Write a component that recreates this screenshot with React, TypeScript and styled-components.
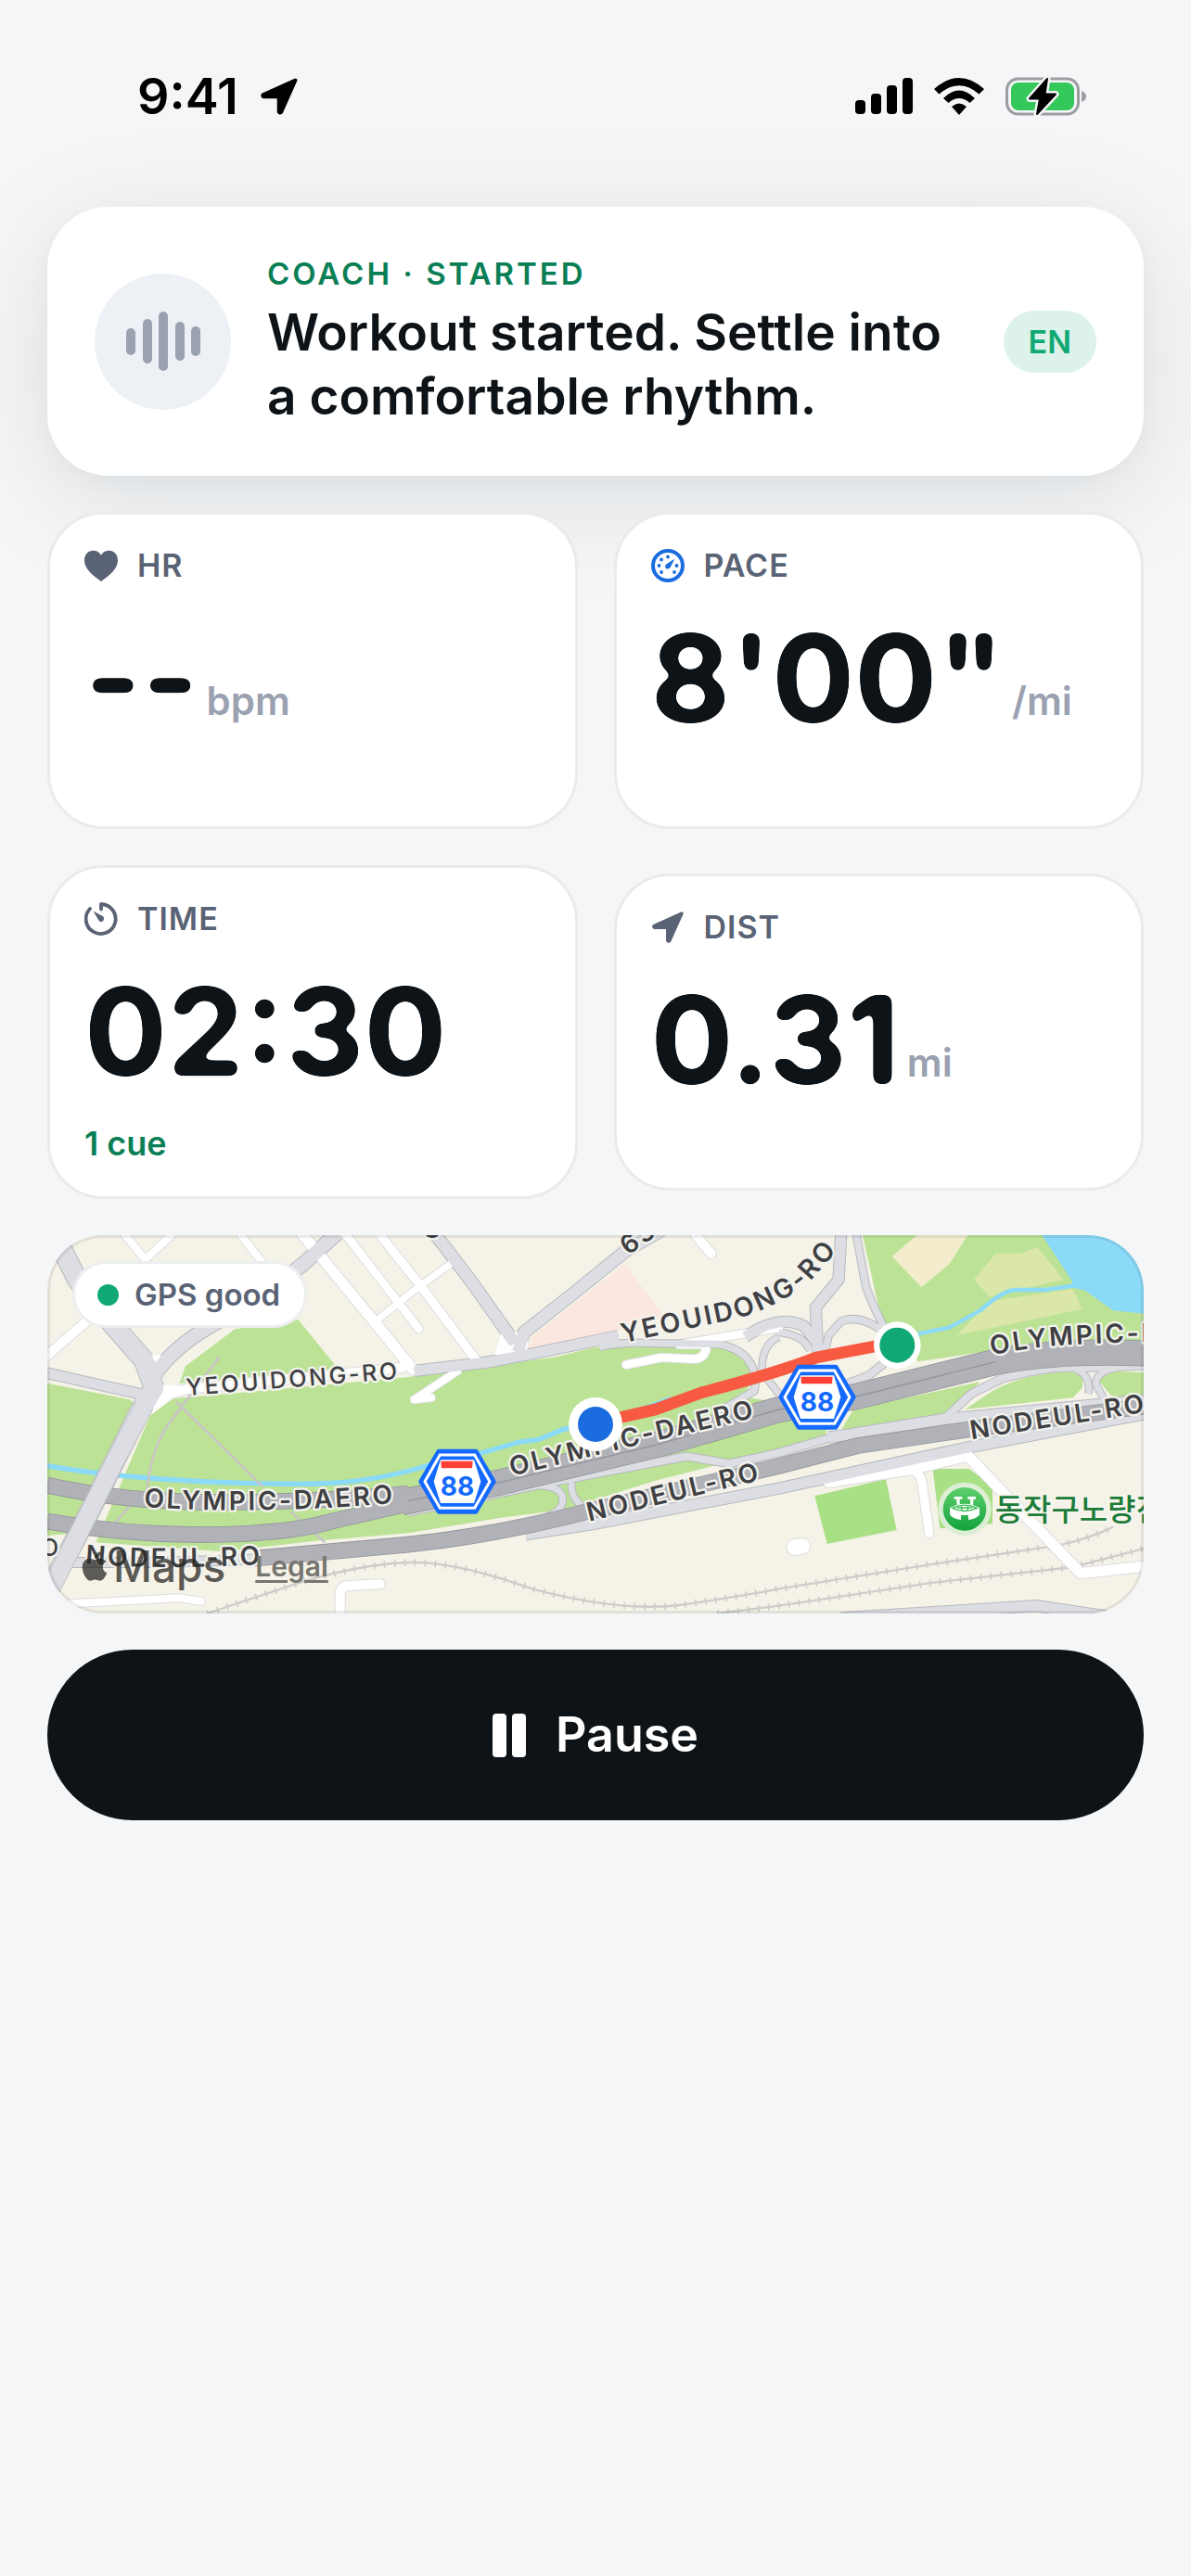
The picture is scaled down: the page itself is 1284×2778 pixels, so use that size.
import { ReactNode, useState } from 'react';
import styled, { createGlobalStyle, ThemeProvider } from 'styled-components';
import { FaApple } from 'react-icons/fa';

const theme = {
  background: '#f4f6f8',
  surface: '#ffffff',
  border: '#e9ebec',
  text: '#0e1318',
  label: '#5a6375',
  muted: '#9aa1b0',
  green: '#11a973',
  greenDark: '#0a7f56',
  greenLight: '#dcf2ea',
  blue: '#1b6ddf',
  font: `Inter, 'Liberation Sans', 'Noto Sans CJK KR', sans-serif`,
};

interface IStat {
  label: string;
  icon: ReactNode;
  value: string;
  unit?: string;
  note?: string;
}

const ArrowIcon = ({ size }: { size: number }) => (
  <svg width={size} height={size} viewBox="0 0 42 42" aria-hidden="true">
    <path
      d="M38.500 3.500L3.500 19.200Q3 20.800 4.500 21.300H20.700V37.500Q21.600 39.200 23.100 38Z"
      fill="currentColor"
      stroke="currentColor"
      strokeWidth="4"
      strokeLinejoin="round"
    />
  </svg>
);

const HeartIcon = () => (
  <svg width="36" height="36" viewBox="0 0 36 36" aria-hidden="true">
    <path
      d="M18 35C8 28 0 21 0 12.500 0 6 4 1.800 9.500 1.800c3.700 0 6.700 1.900 8.500 4.900 1.800-3 4.800-4.900 8.500-4.900C32 1.800 36 6 36 12.500 36 21 28 28 18 35Z"
      fill="currentColor"
    />
  </svg>
);

const GaugeIcon = () => (
  <svg width="36" height="36" viewBox="0 0 36 36" aria-hidden="true">
    <g fill={theme.blue}>
      <circle cx="18" cy="18" r="16" fill="none" stroke={theme.blue} strokeWidth="4" />
      <circle cx="18" cy="8.500" r="1.900" />
      <circle cx="11" cy="11.500" r="1.900" />
      <circle cx="8.500" cy="18" r="1.900" />
      <circle cx="27.500" cy="18" r="1.900" />
      <circle cx="11" cy="25" r="1.900" />
      <circle cx="25" cy="25" r="1.900" />
      <path d="M25.500 10.500L15.500 17Q14.500 20 16.500 21.300 19.500 22.300 20.800 19.500Z" />
    </g>
  </svg>
);

const TimerIcon = () => (
  <svg width="36" height="36" viewBox="0 0 36 36" aria-hidden="true">
    <path
      d="M18 7.500V2a16 16 0 1 1-12 5"
      fill="none"
      stroke="currentColor"
      strokeWidth="3.800"
      strokeLinecap="round"
      strokeLinejoin="round"
    />
    <path
      d="M9.500 9.500L20.500 15.500Q22 19.200 19 20.900 17 21.500 15.500 19.800Z"
      fill="currentColor"
    />
  </svg>
);

const WaveIcon = () => (
  <svg width="80" height="64" viewBox="0 0 80 64" aria-hidden="true">
    <g fill={theme.muted}>
      <rect x="0" y="18" width="10" height="29" rx="5" />
      <rect x="18" y="8" width="10" height="48" rx="5" />
      <rect x="35" y="0" width="10" height="64" rx="5" />
      <rect x="53" y="11" width="10" height="42" rx="5" />
      <rect x="70" y="16" width="10" height="32" rx="5" />
    </g>
  </svg>
);

const SignalIcon = () => (
  <svg width="62" height="40" viewBox="0 0 62 40" aria-hidden="true">
    <rect x="0" y="24" width="11" height="15" rx="4" />
    <rect x="17" y="17" width="11" height="22" rx="4" />
    <rect x="34" y="8" width="11" height="31" rx="4" />
    <rect x="51" y="0" width="11" height="39" rx="4" />
  </svg>
);

const WifiIcon = () => (
  <svg width="54" height="40" viewBox="0 0 54 40" aria-hidden="true">
    <path d="M0 12Q27-12 54 12L48.500 17.500Q27-1 5.500 17.500Z" />
    <path d="M10 22Q27 5 44 22L38.500 27Q27 17 15.500 27Z" />
    <path d="M19 31Q27 24 35 31L27 40Z" />
  </svg>
);

const BatteryIcon = () => (
  <svg width="88" height="44" viewBox="0 0 88 44" aria-hidden="true">
    <rect x="1.500" y="3" width="77" height="38" rx="12" fill="none" stroke="#9b9da0" strokeWidth="3" />
    <path d="M82 16Q87 18 87 22T82 28Z" fill="#9b9da0" />
    <rect x="6" y="7" width="68" height="30" rx="8" fill="#34c759" />
    <path
      d="M45 3L26 24.500H37L34 41 54 19.500H42.500Z"
      stroke={theme.background}
      strokeWidth="7"
      strokeLinejoin="round"
    />
    <path d="M45 3L26 24.500H37L34 41 54 19.500H42.500Z" stroke="#000" strokeWidth="2" strokeLinejoin="round" />
  </svg>
);

const PauseIcon = () => (
  <svg width="36" height="47" viewBox="0 0 36 47" aria-hidden="true">
    <rect x="0" y="0" width="15" height="47" rx="4" fill="currentColor" />
    <rect x="21" y="0" width="15" height="47" rx="4" fill="currentColor" />
  </svg>
);

// softens the corners of the big numerals
const RoundedFilter = () => (
  <FilterDefs width="0" height="0" aria-hidden="true">
    <filter id="rounded" colorInterpolationFilters="sRGB">
      <feGaussianBlur stdDeviation="5" />
      <feColorMatrix values="0 0 0 0 0.055  0 0 0 0 0.075  0 0 0 0 0.094  0 0 0 16 -7.2" />
    </filter>
  </FilterDefs>
);

// road = [path, width]
const lightRoads: [string, number][] = [
  ['M33 482L200 520 345 552', 32],
  ['M75 70L130 180 240 320 345 440 378 530 330 610 250 770 150 970 40 1180', 62],
  ['M378 490Q440 400 560 330L720 240 860 130 970 30', 44],
  ['M1285 30L1400 180 1545 385', 38],
  ['M2020 20L1900 90 1740 220 1575 350 1555 415', 38],
  ['M1220 475L1450 448 1600 420 1880 362', 34],
  ['M1820 397Q1900 380 2000 386L2200 388Q2270 400 2300 440T2320 540L2200 610', 22],
  ['M2600 36L2592 180 2518 270 2525 420', 34],
  ['M2650 36L2680 200Q2700 260 2745 345', 22],
  ['M2545 425L2560 360 2600 315Q2660 290 2740 350', 22],
  ['M2290 365Q2400 290 2480 330L2520 380', 34],
  ['M2400 350Q2480 360 2500 410M2400 365Q2340 390 2345 480L2400 550', 20],
  ['M2740 450L2690 490 2560 540', 24],
  ['M1200 932L1700 828 2100 752 2240 775 2400 740 2570 690', 24],
  ['M2560 690L2620 682 2930 632 3580 570', 34],
  ['M2930 635L3020 550 3120 500Q3280 455 3380 465L3580 458', 24],
  ['M3360 470Q3410 490 3400 550M3490 465Q3420 480 3425 520L3450 565', 20],
  ['M1620 845Q1700 850 1700 890T1640 950M1730 835Q1720 880 1770 920', 20],
  ['M100 1095L400 1095 700 1085', 30],
  ['M1580 1005L1800 970 2400 855 3000 725 3580 615', 34],
  ['M2600 1275L3230 1235 3500 1275', 34],
];

const whiteRoads: [string, number][] = [
  ['M33 425L160 315', 30],
  ['M400 560L480 535 1180 465', 30],
  ['M280 30L350 115 440 30', 24],
  ['M655 30L725 120', 24],
  ['M855 30L1110 340 1215 470', 34],
  ['M1000 36L1235 340', 26],
  ['M1110 36L1240 200 1420 440', 28],
  ['M1100 310L1200 230 1335 130', 22],
  ['M1220 568L1275 562M1220 568L1360 475', 24],
  ['M1905 455L2020 432 2130 437Q2165 430 2165 390L2075 390 2400 335', 26],
  ['M2130 36L2180 95', 30],
  ['M2560 835L2830 793 3010 750 3375 1130 3580 1108', 34],
  ['M2820 795Q2855 800 2862 835L2885 1000', 28],
  ['M2450 1046L2475 1042', 50],
  ['M70 1230L460 1210 530 1220', 24],
  ['M980 1275V1200Q980 1170 1010 1170L1110 1165', 30],
];

const darkRoads: [string, number][] = [
  ['M33 845Q300 905 640 900T1200 872', 48],
  ['M33 962Q300 1008 560 1005T960 960L1200 905', 48],
  ['M1180 900L1500 835 2000 715 2400 600 2650 558 3100 446Q3300 408 3580 418', 80],
  ['M700 1082L1200 1037Q1500 1005 1800 925L2400 783 2650 718 3010 665 3580 590', 48],
];

const rails = [
  'M550 1260L850 1160Q1050 1100 1200 1095T1600 1180Q1900 1260 2100 1230T2400 1180L2900 1100 3300 1040Q3400 1020 3480 980',
  'M2200 1260L2400 1235 2900 1160 3350 1110 3580 1050',
];

const streets = [
  { id: 'street-yeouidong-west', path: 'M484 555L1300 490', name: 'YEOUIDONG-RO', size: 75, weight: 500 },
  { id: 'street-olympic-west', path: 'M345 915Q750 945 1300 890', name: 'OLYMPIC-DAERO', size: 84, weight: 600 },
  { id: 'street-nodeul-west', path: 'M155 1098Q440 1125 900 1090', name: 'NODEUL-RO', size: 84, weight: 600 },
  { id: 'street-olympic-mid', path: 'M1535 815L1900 725 2600 560', name: 'OLYMPIC-DAERO', size: 84, weight: 600 },
  { id: 'street-nodeul-mid', path: 'M1785 962L2500 790', name: 'NODEUL-RO', size: 84, weight: 600 },
  { id: 'street-yeouidong-east', path: 'M1895 385L2100 340 2270 305Q2420 255 2500 185L2700 -40', name: 'YEOUIDONG-RO', size: 86, weight: 600 },
  { id: 'street-olympic-east', path: 'M3088 425Q3300 370 3900 385', name: 'OLYMPIC-DAERO', size: 84, weight: 600 },
  { id: 'street-nodeul-east', path: 'M3022 697L3800 575', name: 'NODEUL-RO', size: 84, weight: 600 },
];

const RouteShield = ({ x, y }: { x: number; y: number }) => (
  <g transform={`translate(${x} ${y})`}>
    <path d="M-60-98H60L118 0 60 98H-60L-118 0Z" fill="#1469ff" stroke="#1469ff" strokeWidth="14" strokeLinejoin="round" />
    <path d="M-56-86H56L105 0 56 86H-56L-105 0Z" fill="none" stroke="#fff" strokeWidth="9" />
    <path d="M-54-70H54Q64-40 76 0 64 40 54 70H-54Q-64 40-76 0-64-40-54-70Z" fill="#fff" />
    <path d="M-53-66H50L48-43H-51Z" fill="#ff4037" />
    <ShieldNumber textAnchor="middle" y="46">
      88
    </ShieldNumber>
  </g>
);

// map units are a third of a pixel
const RouteMap = () => (
  <MapDrawing viewBox="33 36 3546 1224" preserveAspectRatio="xMidYMid slice" role="img" aria-label="Route map">
    <defs>
      <linearGradient id="poi" x1="0" y1="0" x2="0" y2="1">
        <stop offset="0" stopColor="#5ed06c" />
        <stop offset="1" stopColor="#12a23c" />
      </linearGradient>
      {streets.map(street => (
        <path key={street.id} id={street.id} d={street.path} />
      ))}
    </defs>
    <rect x="33" y="36" width="3546" height="1224" fill="#f5f2e7" />
    <g fill="#bce296">
      <path d="M33 515L300 568 330 600 130 1000 33 1008Z" />
      <path d="M365 620L440 565 1200 495 1680 430 1800 400 2220 395 2300 440 2315 490 2290 560 2560 600 2550 690 2400 730 2000 830 1700 925 1500 950 1200 1000 900 1025 600 1060 190 1030Z" />
      <path d="M460 515L480 460 640 340 845 310 975 470Z" />
      <path d="M2670 36H3255L3580 290V420L3250 385 2850 445 2735 330Z" />
      <path d="M2640 600L3050 510 2940 632 2600 668Z" />
      <path d="M3000 600L3090 540Q3200 480 3350 478 3390 490 3380 530L3350 562Z" />
      <path d="M3460 475L3580 480V555L3480 562 3435 510Z" />
    </g>
    <path d="M2845 36L2765 105 2860 205 2950 130 3010 36Z" fill="#f3edcd" />
    <path
      d="M3100 95H3180L3235 75 3320 180 3080 235 3030 180ZM2975 360L3080 250 3350 210 3380 275 3020 350Z"
      fill="#dae7a8"
    />
    <path d="M3250 36H3580V290L3480 280 3390 215 3345 205 3348 185Z" fill="#8adaf8" />
    <path d="M1900 130L2030 300 1880 345 1585 410 1600 365Z" fill="#fbe7df" />
    <path d="M2515 880L2745 825 2780 990 2555 1035ZM2897 792H3015L3090 850V970L2920 985Z" fill="#a9df85" />
    <g fill="none" stroke="#8adaf8">
      <path d="M33 782Q200 812 450 828T900 840 1300 770L1440 740 1560 705 1620 698 1700 665 1900 620 2050 565" strokeWidth="16" />
      <path d="M2850 355L2950 335 3050 280Q3120 218 3160 213H3260L3350 200" strokeWidth="13" />
    </g>
    <path
      d="M590 430L430 640Q370 720 355 860M450 575L730 850M820 930L930 1030M310 900L250 970"
      fill="none"
      stroke="#c9c5c5"
      strokeWidth="8"
    />
    {rails.map(d => (
      <g key={d} fill="none" stroke="#cfccca">
        <path d={d} strokeWidth="7" />
        <path d={d} strokeWidth="22" strokeDasharray="5 28" />
      </g>
    ))}
    <g fill="none" strokeLinejoin="round">
      {whiteRoads.map(([d, width]) => (
        <path key={d} d={d} stroke="#dddce0" strokeWidth={width + 6} strokeLinecap="round" />
      ))}
      {lightRoads.map(([d, width]) => (
        <path key={d} d={d} stroke="#b7b9be" strokeWidth={width + 6} />
      ))}
      {whiteRoads.map(([d, width]) => (
        <path key={d} d={d} stroke="#fff" strokeWidth={width} strokeLinecap="round" />
      ))}
      <path d="M345 415L390 455 450 410 420 425 380 425ZM400 520L480 525 440 560 370 615ZM1505 340L1540 350 1590 350 1585 410 1480 425Z" fill="#fff" />
      {lightRoads.map(([d, width]) => (
        <path key={d} d={d} stroke="#dcdee3" strokeWidth={width} />
      ))}
      {darkRoads.map(([d, width]) => (
        <path key={d} d={d} stroke="#94959c" strokeWidth={width + 5} />
      ))}
      {darkRoads.map(([d, width]) => (
        <path key={d} d={d} stroke="#b1b2b8" strokeWidth={width} />
      ))}
      <path d="M1200 895L1500 835 2000 715 2400 600 2650 558 3100 446" stroke="#94959c" strokeWidth="4" />
      <path d="M345 590L250 770 150 970 50 1170" stroke="#c4c6cb" strokeWidth="62" />
      <path d="M345 590L250 770 150 970 50 1170" stroke="#dcdee3" strokeWidth="56" />
    </g>
    <StreetName fontSize="84" fontWeight="600" transform="translate(1912 103) rotate(-36)">
      63
    </StreetName>
    <StreetName fontSize="84" fontWeight="600" x="1246" y="46">
      O
    </StreetName>
    <StreetName fontSize="75" fontWeight="500" x="12" y="1075">
      O
    </StreetName>
    {streets.map(street => (
      <StreetName key={street.id} fontSize={street.size} fontWeight={street.weight}>
        <textPath href={`#${street.id}`}>{street.name}</textPath>
      </StreetName>
    ))}
    <path
      d="M1860 632L2000 600 2150 545Q2400 480 2520 432L2740 390"
      fill="none"
      stroke="#f75a41"
      strokeWidth="38"
      strokeLinejoin="round"
    />
    <RouteShield x={1359} y={833} />
    <RouteShield x={2523} y={560} />
    <circle cx="1806" cy="648" r="87" fill="#fff" />
    <circle cx="1806" cy="648" r="57" fill={theme.blue} />
    <circle cx="2782" cy="392" r="76" fill="#fff" />
    <circle cx="2782" cy="392" r="57" fill={theme.green} />
    <circle cx="3000" cy="922" r="86" fill="#dcefd5" />
    <circle cx="3000" cy="922" r="70" fill="url(#poi)" />
    <g fill="#fff">
      <path d="M2966 882H2992V890H2984V908H2974V890H2966ZM3010 882H3036V890H3028V908H3018V890H3010Z" />
      <path d="M2952 918Q3000 892 3048 918V940Q3040 954 3012 957V942H2988V957Q2960 954 2952 940Z" />
    </g>
    <path d="M2960 919Q3000 900 3040 919 3000 938 2960 919ZM2975 918H3025M2990 911V926M3010 911V926" fill="none" stroke="#3bbb55" strokeWidth="4" />
    <PlaceName x="3098" y="960">
      동작구노량진
    </PlaceName>
  </MapDrawing>
);

const stats: IStat[] = [
  { label: 'HR', icon: <HeartIcon />, value: '--', unit: 'bpm' },
  { label: 'PACE', icon: <GaugeIcon />, value: `8'00"`, unit: '/mi' },
  { label: 'TIME', icon: <TimerIcon />, value: '02:30', note: '1 cue' },
  { label: 'DIST', icon: <ArrowIcon size={36} />, value: '0.31', unit: 'mi' },
];

const StatCard = ({ label, icon, value, unit, note }: IStat) => (
  <Card>
    <CardLabel>
      {icon}
      {label}
    </CardLabel>
    <Reading>
      <Value>{value}</Value>
      {unit && <Unit>{unit}</Unit>}
    </Reading>
    {note && <Note>{note}</Note>}
  </Card>
);

const App = () => {
  const [paused, setPaused] = useState(false);
  return (
    <ThemeProvider theme={theme}>
      <GlobalStyle />
      <RoundedFilter />
      <StatusBar>
        <StatusGroup>
          <Clock>9:41</Clock>
          <ArrowIcon size={42} />
        </StatusGroup>
        <StatusGroup>
          <SignalIcon />
          <WifiIcon />
          <BatteryIcon />
        </StatusGroup>
      </StatusBar>
      <Page>
        <CoachCard>
          <CoachAvatar>
            <WaveIcon />
          </CoachAvatar>
          <CoachBody>
            <CoachStatus>COACH · STARTED</CoachStatus>
            <CoachMessage>Workout started. Settle into a comfortable rhythm.</CoachMessage>
          </CoachBody>
          <Language>EN</Language>
        </CoachCard>
        <StatGrid>
          {stats.map(stat => (
            <StatCard key={stat.label} {...stat} />
          ))}
        </StatGrid>
        <MapCard>
          <RouteMap />
          <GpsBadge>
            <GpsDot />
            GPS good
          </GpsBadge>
          <Attribution>
            <MapsBrand>
              <FaApple size={36} />
              Maps
            </MapsBrand>
            <LegalLink href="#legal">Legal</LegalLink>
          </Attribution>
        </MapCard>
        <PauseButton type="button" aria-pressed={paused} onClick={() => setPaused(!paused)}>
          <PauseIcon />
          Pause
        </PauseButton>
      </Page>
    </ThemeProvider>
  );
};

export default App;

const GlobalStyle = createGlobalStyle`
  * {
    box-sizing: border-box;
  }
  body {
    margin: 0;
    min-height: 100vh;
    background-color: ${theme.background};
    color: ${theme.text};
    font-family: ${theme.font};
  }
  svg {
    flex-shrink: 0;
  }
`;
const FilterDefs = styled.svg`
  position: absolute;
`;
const StatusBar = styled.header`
  display: flex;
  align-items: center;
  justify-content: space-between;
  padding: 72px 112px 0 148px;
`;
const StatusGroup = styled.div`
  display: flex;
  align-items: center;
  gap: 23px;
  color: #000;
`;
const Clock = styled.time`
  font-size: 54px;
  line-height: 64px;
  font-weight: 600;
`;
const Page = styled.main`
  display: flex;
  flex-direction: column;
  gap: 39px;
  padding: 87px 51px 51px;
`;
const CoachCard = styled.section`
  display: flex;
  align-items: center;
  gap: 39px;
  padding: 51px;
  border-radius: 66px;
  background-color: ${theme.surface};
  box-shadow: 0 24px 120px rgba(14, 19, 24, 0.1), 0 6px 24px rgba(14, 19, 24, 0.03);
`;
const CoachAvatar = styled.div`
  display: flex;
  align-items: center;
  justify-content: center;
  flex-shrink: 0;
  width: 147px;
  height: 147px;
  border-radius: 50%;
  background-color: #edf1f5;
`;
const CoachBody = styled.div`
  flex: 1;
`;
const CoachStatus = styled.p`
  margin: 0 0 8px;
  font-size: 33px;
  line-height: 42px;
  font-weight: 600;
  letter-spacing: 3px;
  color: ${theme.greenDark};
`;
const CoachMessage = styled.p`
  margin: 0;
  font-size: 55px;
  line-height: 69px;
  font-weight: 600;
`;
const Language = styled.span`
  padding: 12px 27px;
  border-radius: 34px;
  background-color: ${theme.greenLight};
  color: ${theme.green};
  font-size: 34px;
  line-height: 43px;
  font-weight: 600;
`;
const StatGrid = styled.div`
  position: relative;
  display: grid;
  grid-template-columns: 1fr 1fr;
  align-items: center;
  gap: 39px;
`;
const Card = styled.section`
  min-height: 342px;
  padding: 33px 37px 35px;
  border: 3px solid ${theme.border};
  border-radius: 60px;
  background-color: ${theme.surface};
`;
const CardLabel = styled.h2`
  display: flex;
  align-items: center;
  gap: 21px;
  margin: 0 0 20px;
  font-size: 34px;
  line-height: 44px;
  font-weight: 600;
  letter-spacing: 1px;
  color: ${theme.label};
`;
const Reading = styled.p`
  display: flex;
  align-items: flex-end;
  gap: 8px;
  margin: 0;
`;
const Value = styled.span`
  font-size: 132px;
  line-height: 158px;
  font-weight: 700;
  filter: url(#rounded);
`;
const Unit = styled.span`
  padding-bottom: 29px;
  font-size: 42px;
  line-height: 50px;
  font-weight: 600;
  color: ${theme.muted};
`;
const Note = styled.p`
  margin: 20px 0 0;
  font-size: 36px;
  line-height: 44px;
  font-weight: 600;
  color: ${theme.greenDark};
`;
const MapCard = styled.section`
  position: relative;
  height: 408px;
  border-radius: 60px;
  overflow: hidden;
  &::after {
    content: '';
    position: absolute;
    inset: 0;
    border: 3px solid rgba(14, 19, 24, 0.08);
    border-radius: 60px;
    pointer-events: none;
  }
`;
const MapDrawing = styled.svg`
  display: block;
  width: 100%;
  height: 100%;
`;
const StreetName = styled.text`
  fill: #3f4043;
  stroke: #f3f3ee;
  stroke-width: 14px;
  stroke-linejoin: round;
  paint-order: stroke;
  letter-spacing: 8px;
`;
const ShieldNumber = styled.text`
  fill: #1469ff;
  font-size: 84px;
  font-weight: 700;
`;
const PlaceName = styled.text`
  fill: #1c7c38;
  stroke: #f7f5ee;
  stroke-width: 14px;
  stroke-linejoin: round;
  paint-order: stroke;
  font-size: 99px;
  font-weight: 500;
`;
const GpsBadge = styled.div`
  position: absolute;
  top: 28px;
  left: 27px;
  display: flex;
  align-items: center;
  gap: 17px;
  padding: 10px 26px 10px 24px;
  border: 3px solid #eceef0;
  border-radius: 36px;
  background-color: ${theme.surface};
  color: ${theme.label};
  font-size: 33px;
  line-height: 46px;
  font-weight: 600;
`;
const GpsDot = styled.span`
  width: 23px;
  height: 23px;
  border-radius: 50%;
  background-color: ${theme.green};
`;
const Attribution = styled.div`
  position: absolute;
  left: 33px;
  bottom: 24px;
  display: flex;
  align-items: center;
  gap: 32px;
  color: rgba(40, 40, 36, 0.75);
`;
const MapsBrand = styled.span`
  display: flex;
  align-items: center;
  gap: 2px;
  font-size: 46px;
  line-height: 54px;
  font-weight: 500;
`;
const LegalLink = styled.a`
  font-size: 30px;
  line-height: 36px;
  font-weight: 600;
  color: #77756f;
  text-decoration: underline;
  text-decoration-thickness: 3px;
  text-underline-offset: 4px;
`;
const PauseButton = styled.button`
  display: flex;
  align-items: center;
  justify-content: center;
  gap: 32px;
  padding: 60px;
  border: 0;
  border-radius: 92px;
  background-color: ${theme.text};
  color: #fff;
  font-family: inherit;
  font-size: 52px;
  line-height: 64px;
  font-weight: 600;
  cursor: pointer;
`;
